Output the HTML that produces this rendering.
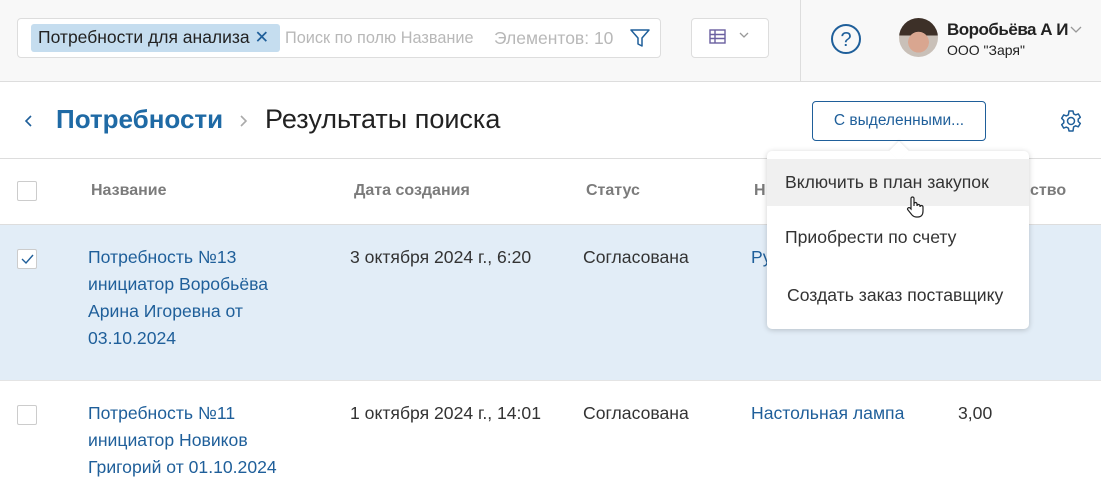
<!DOCTYPE html>
<html><head><meta charset="utf-8"><style>
*{box-sizing:border-box;margin:0;padding:0}
body{width:1101px;height:499px;overflow:hidden;background:#fff;font-family:"Liberation Sans",sans-serif;position:relative;color:#333}
.a{position:absolute;white-space:nowrap}
.hdr{position:absolute;left:0;top:0;width:1101px;height:82px;background:#f8f8f8;border-bottom:1px solid #ddd}
.cb{position:absolute;width:20px;height:20px;border:1px solid #ccc;background:#fff;border-radius:2px}
.th{font-size:16px;font-weight:bold;color:#7b7b7b}
.lnk{color:#1f5f9a;font-size:17.6px;line-height:27px}
.txt{font-size:17.6px;line-height:27px;color:#333}
</style></head><body>
<div class="hdr"></div>
<div class="a" style="left:17px;top:18px;width:644px;height:40px;border:1px solid #ddd;border-radius:4px;background:#fff"></div>
<div class="a" style="left:31px;top:24px;width:249px;height:28px;background:#c5ddef;border-radius:3px"></div>
<div class="a" style="left:38px;top:27px;font-size:17.5px;color:#222">Потребности для анализа <span style="color:#1f5f9a">✕</span></div>
<div class="a" style="left:285px;top:29px;font-size:16.3px;color:#b8b8b8">Поиск по полю Название</div>
<div class="a" style="left:494px;top:28px;font-size:17.5px;color:#b8b8b8">Элементов: 10</div>
<svg class="a" style="left:629px;top:27px" width="22" height="22" viewBox="0 0 22 22"><path d="M2 3h18l-7 8v8l-4-2v-6z" fill="none" stroke="#1f5f9a" stroke-width="1.5" stroke-linejoin="round"/></svg>
<div class="a" style="left:691px;top:18px;width:78px;height:40px;border:1px solid #ddd;border-radius:4px;background:#fff"></div>
<svg class="a" style="left:708px;top:28px" width="20" height="18" viewBox="0 0 20 18"><rect x="2" y="2" width="15" height="13" fill="none" stroke="#6a5fa0" stroke-width="1.4"/><path d="M2 6.5h15M2 10.5h15M7 2v13" stroke="#6a5fa0" stroke-width="1.4"/></svg>
<svg class="a" style="left:738px;top:31px" width="12" height="8"><path d="M2 2l4 4 4-4" fill="none" stroke="#999" stroke-width="1.3"/></svg>
<div class="a" style="left:800px;top:0;width:1px;height:82px;background:#ddd"></div>
<svg class="a" style="left:830px;top:23px" width="32" height="32" viewBox="0 0 32 32"><circle cx="16" cy="16" r="14" fill="none" stroke="#1f5f9a" stroke-width="2"/><text x="16" y="23" text-anchor="middle" font-family="Liberation Sans" font-size="20" fill="#1f5f9a">?</text></svg>
<div class="a" style="left:899px;top:18px;width:39px;height:39px;border-radius:50%;background:radial-gradient(circle at 50% 62%,#d9a690 0 33%,transparent 34%),linear-gradient(#3d3028 0 45%,#c9c0b8 45%)"></div>
<div class="a" style="left:947px;top:20px;font-size:17px;font-weight:bold;color:#222;letter-spacing:-0.5px">Воробьёва А И</div>
<svg class="a" style="left:1069px;top:25px" width="14" height="9"><path d="M2 2l5 5 5-5" fill="none" stroke="#999" stroke-width="1.3"/></svg>
<div class="a" style="left:947px;top:42px;font-size:14px;color:#222">ООО "Заря"</div>

<svg class="a" style="left:22px;top:114px" width="12" height="14"><path d="M9 2L4 7l5 5" fill="none" stroke="#1f5f9a" stroke-width="1.6"/></svg>
<div class="a" style="left:56px;top:104px;font-size:26px;font-weight:bold;color:#1f6aa5">Потребности</div>
<svg class="a" style="left:238px;top:114px" width="12" height="14"><path d="M3 2l5 5-5 5" fill="none" stroke="#aaa" stroke-width="1.6"/></svg>
<div class="a" style="left:265px;top:104px;font-size:27px;color:#222">Результаты поиска</div>
<div class="a" style="left:812px;top:101px;width:174px;height:40px;border:1px solid #1f5f9a;border-radius:4px;font-size:15.5px;color:#1f5f9a;text-align:center;line-height:38px">С выделенными...</div>
<svg class="a" style="left:1059px;top:109px" width="24" height="24" viewBox="0 0 24 24"><path d="M10 2h4l.6 2.8 2 1.1 2.7-1 2 3.4-2.1 1.9v2.3l2.1 1.9-2 3.4-2.7-1-2 1.1L14 22h-4l-.6-2.8-2-1.1-2.7 1-2-3.4 2.1-1.9v-2.3L2.7 9.3l2-3.4 2.7 1 2-1.1z" fill="none" stroke="#1f5f9a" stroke-width="1.5" stroke-linejoin="round"/><circle cx="12" cy="12" r="3.5" fill="none" stroke="#1f5f9a" stroke-width="1.5"/></svg>
<div class="a" style="left:0;top:158px;width:1101px;height:1px;background:#ddd"></div>

<div class="cb" style="left:17px;top:181px"></div>
<div class="a th" style="left:91px;top:182px">Название</div>
<div class="a th" style="left:354px;top:182px">Дата создания</div>
<div class="a th" style="left:586px;top:182px">Статус</div>
<div class="a th" style="left:754px;top:182px">Н</div>
<div class="a th" style="left:1030px;top:182px">ство</div>
<div class="a" style="left:0;top:224px;width:1101px;height:1px;background:#ddd"></div>

<div class="a" style="left:0;top:225px;width:1101px;height:155px;background:#e2edf7"></div>
<div class="cb" style="left:17px;top:249px"></div>
<svg class="a" style="left:20px;top:253px" width="14" height="12"><path d="M2 6l4 4 7-8" fill="none" stroke="#1f5f9a" stroke-width="1.4"/></svg>
<div class="a lnk" style="left:88px;top:244px">Потребность №13<br>инициатор Воробьёва<br>Арина Игоревна от<br>03.10.2024</div>
<div class="a txt" style="left:350px;top:244px">3 октября 2024 г., 6:20</div>
<div class="a txt" style="left:583px;top:244px">Согласована</div>
<div class="a lnk" style="left:751px;top:244px">Ру</div>
<div class="a" style="left:0;top:380px;width:1101px;height:1px;background:#e4e4e4"></div>

<div class="cb" style="left:17px;top:405px"></div>
<div class="a lnk" style="left:88px;top:400px">Потребность №11<br>инициатор Новиков<br>Григорий от 01.10.2024</div>
<div class="a txt" style="left:350px;top:400px">1 октября 2024 г., 14:01</div>
<div class="a txt" style="left:583px;top:400px">Согласована</div>
<div class="a lnk" style="left:751px;top:400px">Настольная лампа</div>
<div class="a txt" style="left:958px;top:400px">3,00</div>

<div class="a" style="left:767px;top:151px;width:262px;height:178px;background:#fff;border-radius:5px;box-shadow:0 1px 6px rgba(0,0,0,.2)"></div>
<div class="a" style="left:892px;top:144px;width:14px;height:14px;background:#fff;transform:rotate(45deg);box-shadow:-1px -1px 2px rgba(0,0,0,.08)"></div>
<div class="a" style="left:767px;top:159px;width:262px;height:47px;background:#f0f0f0"></div>
<div class="a" style="left:785px;top:172px;font-size:17.6px;color:#333">Включить в план закупок</div>
<div class="a" style="left:785px;top:227px;font-size:17.6px;color:#333">Приобрести по счету</div>
<div class="a" style="left:787px;top:285px;font-size:17.6px;color:#333">Создать заказ поставщику</div>
<svg class="a" style="left:905px;top:195px" width="20" height="24" viewBox="0 0 20 24"><path d="M6 14V3.5a1.5 1.5 0 013 0V11V9a1.5 1.5 0 013 0v2a1.5 1.5 0 013 0v1a1.5 1.5 0 013 0v4c0 4-2 6-5 6h-2c-2 0-3-1-4-2l-4-5a1.4 1.4 0 012-2z" fill="#fff" stroke="#222" stroke-width="1.2"/></svg>
</body></html>
